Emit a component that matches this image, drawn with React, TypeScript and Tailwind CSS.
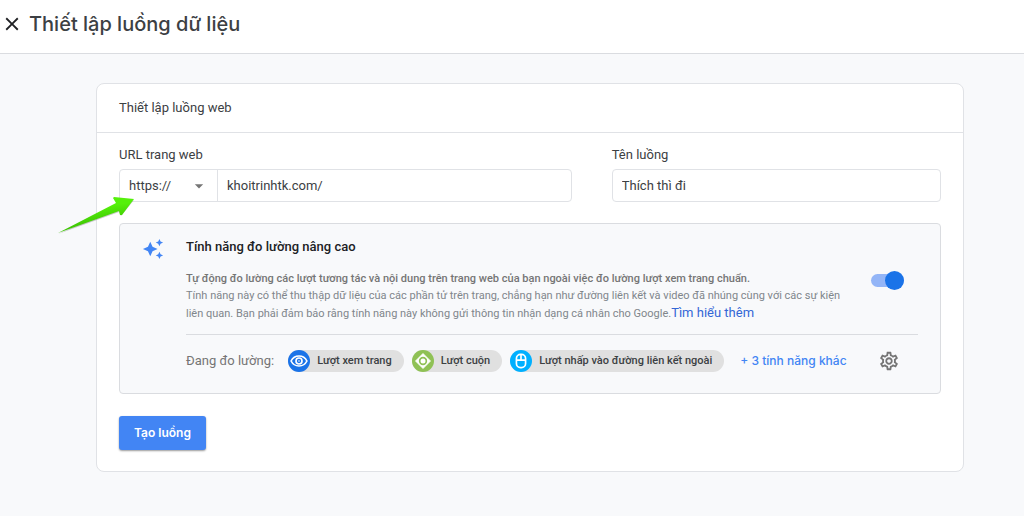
import React, { useState } from 'react';
import { MdArrowDropDown, MdAutoAwesome, MdClose, MdOutlineSettings } from 'react-icons/md';

interface Measurement {
  label: string;
  color: string;
  icon: React.ReactNode;
}

const EyeIcon = () => (
  <svg viewBox="0 0 24 24" className="h-5 w-5" fill="none" stroke="white" strokeWidth="2">
    <path d="M2.500 12C4.500 8 8 6 12 6s7.500 2 9.500 6c-2 4-5.500 6-9.500 6s-7.500-2-9.500-6z" />
    <circle cx="12" cy="12" r="3.600" />
    <circle cx="12" cy="12" r="1" fill="white" stroke="none" />
  </svg>
);

const ScrollIcon = () => (
  <svg viewBox="0 0 24 24" className="h-5 w-5" fill="white">
    <path d="M12 3L21 12 12 21 3 12z" stroke="white" strokeLinejoin="round" />
    <circle cx="12" cy="12" r="5" fill="#8fc155" />
    <circle cx="12" cy="12" r="3" />
  </svg>
);

const MouseIcon = () => (
  <svg viewBox="0 0 24 24" className="h-5 w-5" fill="none" stroke="white" strokeWidth="2">
    <rect x="6.500" y="4" width="11" height="16" rx="5" />
    <path d="M6.500 11h11M12 4v7" />
  </svg>
);

const measurements: Measurement[] = [
  { label: 'Lượt xem trang', color: 'bg-[#1a73e8]', icon: <EyeIcon /> },
  { label: 'Lượt cuộn', color: 'bg-[#8fc155]', icon: <ScrollIcon /> },
  { label: 'Lượt nhấp vào đường liên kết ngoài', color: 'bg-[#00b0ff]', icon: <MouseIcon /> },
];

const Chip: React.FC<{ item: Measurement }> = ({ item }) => (
  <li className="flex h-[22px] items-center gap-[7px] whitespace-nowrap rounded-full bg-[#e0e0e0] pr-3 text-[11px] font-medium text-[#3c4043]">
    <span className={`flex h-[22px] w-[22px] items-center justify-center rounded-full ${item.color}`}>
      {item.icon}
    </span>
    {item.label}
  </li>
);

// Green pointer laid over the protocol field
const PointerArrow = () => (
  <svg
    viewBox="0 0 78 40"
    className="pointer-events-none absolute -left-[63px] top-[26px] h-10 w-[78px]"
    aria-hidden="true"
  >
    <defs>
      <linearGradient id="pointer" x1="0" y1="0" x2="0.300" y2="1">
        <stop offset="0.400" stopColor="#55f00b" />
        <stop offset="1" stopColor="#35b500" />
      </linearGradient>
    </defs>
    <path d="M1 38L62 16l2 4 13-16z" fill="#777" opacity="0.400" />
    <path d="M1 37L59 7l-3-5 1-1 20 2-12 16-2 0-1-4z" fill="url(#pointer)" />
  </svg>
);

export default function App() {
  const [enhanced, setEnhanced] = useState(true);
  const [protocol, setProtocol] = useState('https://');

  return (
    <div className="min-h-screen bg-[#f8f9fb] font-['Roboto','Noto_Sans',sans-serif] text-[13px] text-[#3c4043]">
      <header className="flex h-[54px] items-center gap-1.5 border-b border-[#dadce0] bg-white px-px pb-1.5">
        <button type="button" aria-label="Đóng" className="text-[#202124]">
          <MdClose className="h-[22px] w-[22px]" />
        </button>
        <h1 className="font-['Inter','Roboto',sans-serif] text-[20px] font-medium text-[#3c4043]">
          Thiết lập luồng dữ liệu
        </h1>
      </header>

      <main className="pb-11 pl-24 pr-[60px] pt-[29px]">
        <form
          className="rounded-lg border border-[#e0e2e6] bg-white"
          onSubmit={(e) => e.preventDefault()}
        >
          <h2 className="border-b border-[#e0e2e6] px-[22px] py-[14px] leading-5">Thiết lập luồng web</h2>

          <div className="px-[22px] pb-[21px] pt-3">
            <div className="grid grid-cols-[11fr_8fr] gap-10">
              <div>
                <label htmlFor="url" className="block leading-5">URL trang web</label>
                <div className="relative mt-1 flex h-[33px] rounded border border-[#e0e2e6]">
                  <div className="relative flex w-[98px] items-center border-r border-[#e0e2e6]">
                    <select
                      aria-label="Giao thức"
                      value={protocol}
                      onChange={(e) => setProtocol(e.target.value)}
                      className="h-full w-full appearance-none bg-transparent pl-[9px] outline-none"
                    >
                      <option>https://</option>
                      <option>http://</option>
                    </select>
                    <MdArrowDropDown className="pointer-events-none absolute right-2 h-5 w-5 text-[#757575]" />
                  </div>
                  <input
                    id="url"
                    type="text"
                    defaultValue="khoitrinhtk.com/"
                    className="min-w-0 flex-1 bg-transparent px-[9px] outline-none"
                  />
                  <PointerArrow />
                </div>
              </div>
              <div>
                <label htmlFor="name" className="block leading-5">Tên luồng</label>
                <input
                  id="name"
                  type="text"
                  defaultValue="Thích thì đi"
                  className="mt-1 block h-[33px] w-full rounded border border-[#e0e2e6] px-[9px] outline-none"
                />
              </div>
            </div>

            <section className="mt-[21px] flex rounded-sm border border-[#dadce0] bg-[#f8f9fb] px-[22px] pb-[21px] pt-[13px]">
              <div className="w-11 shrink-0">
                <MdAutoAwesome className="mt-px h-[22px] w-[22px] text-[#4285f4]" />
              </div>
              <div className="min-w-0 flex-1">
                <h3 className="font-medium leading-5 text-[#202124]">Tính năng đo lường nâng cao</h3>
                <div className="flex items-center justify-between border-b border-[#dadce0] pb-3 pt-[13px]">
                  <div className="w-[665px] text-[11px] leading-[17px] text-[#80868b]">
                    <p className="font-medium text-[#757575]">
                      Tự động đo lường các lượt tương tác và nội dung trên trang web của bạn ngoài việc đo lường lượt xem trang chuẩn.
                    </p>
                    <p>
                      Tính năng này có thể thu thập dữ liệu của các phần tử trên trang, chẳng hạn như đường liên kết và video đã nhúng cùng với các sự kiện liên quan. Bạn phải đảm bảo rằng tính năng này không gửi thông tin nhận dạng cá nhân cho Google.
                      <a href="#" className="text-[13px] text-[#3367d6]">Tìm hiểu thêm</a>
                    </p>
                  </div>
                  <input
                    type="checkbox"
                    role="switch"
                    aria-label="Tính năng đo lường nâng cao"
                    checked={enhanced}
                    onChange={(e) => setEnhanced(e.target.checked)}
                    className="mb-8 mr-3.5 flex h-[13px] w-[33px] shrink-0 appearance-none items-center rounded-full bg-gray-300 before:h-[19px] before:w-[19px] before:rounded-full before:bg-gray-500 checked:justify-end checked:bg-[#93b5f7] checked:before:bg-[#1a73e8]"
                  />
                </div>

                <div className="flex items-center pt-[15px]">
                  <span className="mr-3.5 whitespace-nowrap text-[#757575]">Đang đo lường:</span>
                  <ul className="flex gap-2">
                    {measurements.map((item) => (
                      <Chip key={item.label} item={item} />
                    ))}
                  </ul>
                  <button
                    type="button"
                    className="ml-4 whitespace-nowrap font-['Inter','Roboto',sans-serif] text-[12px] font-medium text-[#4285f4]"
                  >
                    + 3 tính năng khác
                  </button>
                  <button type="button" aria-label="Cài đặt" className="ml-auto mr-[18px] text-[#757575]">
                    <MdOutlineSettings className="h-[22px] w-[22px]" />
                  </button>
                </div>
              </div>
            </section>

            <button
              type="submit"
              className="mt-[22px] h-[34px] rounded-[3px] bg-[#4285f4] px-[15px] font-['Inter','Roboto',sans-serif] text-[12px] font-semibold text-white shadow-[0_1px_2px_rgba(0,0,0,0.4)]"
            >
              Tạo luồng
            </button>
          </div>
        </form>
      </main>
    </div>
  );
}
